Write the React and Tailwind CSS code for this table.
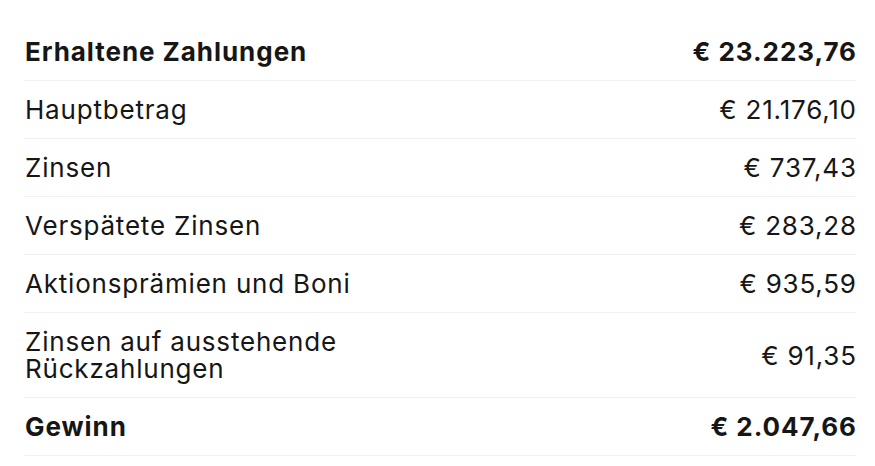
export default function App() {
  const rows = [
    { label: "Erhaltene Zahlungen", value: "€ 23.223,76", bold: true },
    { label: "Hauptbetrag", value: "€ 21.176,10" },
    { label: "Zinsen", value: "€ 737,43" },
    { label: "Verspätete Zinsen", value: "€ 283,28" },
    { label: "Aktionsprämien und Boni", value: "€ 935,59" },
    { label: "Zinsen auf ausstehende Rückzahlungen", value: "€ 91,35", wrap: true },
    { label: "Gewinn", value: "€ 2.047,66", bold: true },
  ];
  return (
    <div className="bg-white w-[875px] h-[466px] pt-[23px] px-[24px]" style={{ fontFamily: "Inter, 'Noto Sans', sans-serif" }}>
      <div className="w-[832px] text-[#161616]">
        {rows.map((r, i) => (
          <div key={i} className={`flex justify-between items-center py-[15px] border-b border-[#f1f1f1] text-[26px] leading-[27px] ${r.bold ? "tracking-[0.95px]" : "tracking-[0.8px]"}`}>
            <div className={`${r.bold ? "font-bold" : "font-normal"} ${r.wrap ? "max-w-[360px]" : ""} pl-px`}>{r.label}</div>
            <div className={`${r.bold ? "font-bold -mr-[0.95px]" : "font-normal -mr-[0.8px]"} text-right`}>{r.value}</div>
          </div>
        ))}
      </div>
    </div>
  );
}
